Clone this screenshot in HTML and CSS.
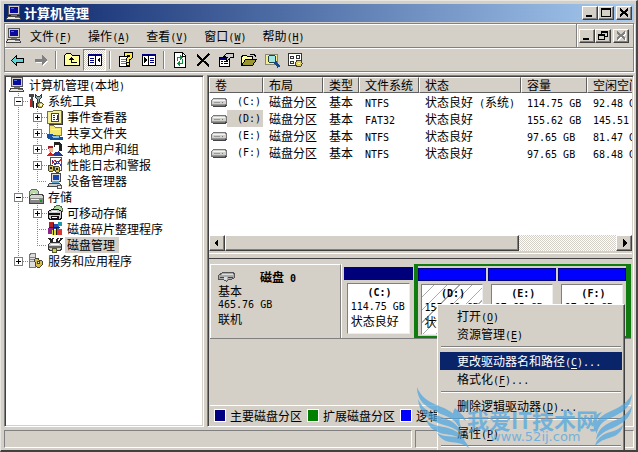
FILE: index.html
```html
<!DOCTYPE html>
<html lang="zh-CN">
<head>
<meta charset="utf-8">
<title>计算机管理</title>
<link rel="stylesheet" href="styles.css">
</head>
<body>
<svg class="defs" aria-hidden="true">
  <symbol id="pc" viewBox="0 0 16 16"><path fill="#fff" stroke="#555" d="M2.500.5h11v9h-11z"/><path fill="#d4d0c8" d="M3 1h10v8H3z"/><path fill="#0a0a9c" d="M4 2h8v6H4z"/><path fill="#4a6ae0" d="M5 3h3v1H5z"/><path fill="#e8e6e0" stroke="#444" d="M1.500 11.500h12l1 3h-14z"/><path fill="#777" d="M5 10h6v1H5zM9 12h4v1H9z"/></symbol>
  <symbol id="tools" viewBox="0 0 16 16"><path fill="#444" d="M1 1h5v3H5v10H3V4H1z"/><path fill="#b22" d="M2 6h2v8H2z"/><path fill="#8aa" stroke="#333" d="M7.500 1.500v3l2 2v7h2v-7l2-2v-3l-2 2h-2z"/><path fill="#d9c34a" stroke="#553" d="M10.500 9.500h3l2 2-2 3h-3l-1-3z"/><path fill="#fff" d="M12 11h2v2h-2z"/><path stroke="#222" d="M5.500 8v7M8.500 10v5"/></symbol>
  <symbol id="event" viewBox="0 0 16 16"><path fill="#f6ef9c" stroke="#77713a" d="M.5 2.500h5l1-1h8v13h-14z"/><path fill="#fff" stroke="#444" d="M4.500 4.500h7v8h-7z"/><path fill="none" stroke="#333" d="M6 6.500h2M6 8.500h2M6 10.500h2M10.500 6v5M9 10.500h2"/><path fill="none" stroke="#333" d="M15.500 2v13.500H2"/></symbol>
  <symbol id="share" viewBox="0 0 16 16"><path fill="#f5e66e" stroke="#88823c" d="M2.500.5h4l2 2h6v8h-12z"/><path fill="#fff8a8" d="M4 4h9v1H4z"/><path fill="#164fa0" d="M0 9h5l5 2 6 1v3H4l-4-2z"/><path fill="#8bc3df" d="M5 11h7v2H6z"/></symbol>
  <symbol id="users" viewBox="0 0 16 16"><path fill="#222" d="M7 1h6l2 3v6h-4l-4-4z"/><path fill="#fff" d="M8 4h4v5l-2 2-2-3z"/><path fill="#923" d="M1 5h5v3H1z"/><path fill="#e8b890" d="M2 7h4v4H2z"/><path fill="#263895" d="M7 12l5-2 4 5H6z"/><path fill="#c22" d="M0 14l3-3 5 4H0z"/></symbol>
  <symbol id="perf" viewBox="0 0 16 16"><path fill="#fff" stroke="#555" d="M3.500.5h11v13h-11z"/><path fill="none" stroke="#c22" d="M5 7l3-4 3 4 3-5"/><path fill="none" stroke="#339" d="M5 3l3 5 3-4 3 5"/><path fill="#d2ba57" stroke="#443" d="M2 8h3l2 2-1 4H2l-1-3zM8 9h3l2 2-1 4H9l-2-3z"/><path fill="#222" d="M3 10h2v2H3zM9 11h2v2H9z"/></symbol>
  <symbol id="device" viewBox="0 0 16 16"><path fill="#ddd" stroke="#444" d="M4.500.5h9v8h-9z"/><path fill="#1744b4" d="M6 2h6v5H6z"/><path fill="#ccc" stroke="#444" d="M2.500 10.500h10l2 3h-14z"/><path fill="#5ca8d0" d="M5 8h7v2H5z"/><path fill="#eee" stroke="#555" d="M10.500 12.500h4v3h-4z"/></symbol>
  <symbol id="store" viewBox="0 0 16 16"><circle cx="6" cy="5" r="5" fill="#b9d9a6" stroke="#667"/><path fill="#fff" d="M5 4h2v2H5z"/><path fill="#d5d5d0" stroke="#444" d="M1.500 7.500l2-2h11l1 2v7h-14z"/><path fill="#888" d="M2 9h13v5H2z"/><path fill="#eee" d="M3 10h8v1H3z"/><path fill="#191" d="M12 11h2v2h-2z"/></symbol>
  <symbol id="remove" viewBox="0 0 16 16"><circle cx="11" cy="5" r="4.500" fill="#acdba0" stroke="#564"/><path fill="#fff" d="M10 4h2v2h-2z"/><path fill="#ccc" stroke="#111" d="M1.500 6.500l3-2h7l3 2v7l-2 1h-10l-1-2z"/><path fill="#111" d="M2 8h11v2H2zM4 11h8v3H4z"/><path fill="#fff" d="M5 6h5v1H5zM5 12h5v1H5z"/></symbol>
  <symbol id="defrag" viewBox="0 0 16 16"><path fill="#b32323" d="M2 1h5v5H2z"/><path fill="#264eb8" d="M7 3h5v5H7z"/><path fill="#8c268a" d="M1 7h5v6H1z"/><path fill="#d6dc40" d="M5 9h4v5H5z"/><path fill="#d33" d="M9 8h6v6H9z"/><path fill="#29a" d="M11 1h4v4h-4z"/><path stroke="#222" d="M6.500 2v12M2 6.500h11M9.500 7v7"/></symbol>
  <symbol id="manage" viewBox="0 0 16 16"><path fill="none" stroke="#222" stroke-width="2" d="M2 1l4 5M6 1L4 5M11 1l-2 5M15 1l-4 5"/><path fill="#cfcfc9" stroke="#333" d="M1.500 7.500l2-2h9l2 2v5l-2 1h-9l-2-1z"/><path fill="#666" d="M2 9h12v2H2z"/><path fill="#fff" d="M4 7h8v1H4z"/><path fill="#dc4" stroke="#553" d="M5.500 11.500h4v4h-4z"/></symbol>
  <symbol id="service" viewBox="0 0 16 16"><path fill="#ddd" stroke="#777" d="M1.500 1.500l2-1h4v14h-6z"/><path stroke="#888" d="M2 4.500h5M2 6.500h5M2 8.500h5"/><path fill="#d8bb45" stroke="#443" d="M8 5h2l1 2h2l2 2-1 3-2 2H9l-2-2V9l-1-2z"/><path fill="#fff" stroke="#443" d="M9.500 8.500h2v2h-2z"/></symbol>
  <symbol id="drive" viewBox="0 0 16 10"><path fill="#d0d0cc" stroke="#777" d="M.5 3.500l2-2h12l1 2v4l-2 1H.5z"/><path fill="#f4f4f0" d="M2 3h12v1H2z"/><path fill="#999" d="M1 7h13v1H1zM3 5h6v1H3z"/><path fill="#777" d="M11 5h1v1h-1z"/><path fill="#444" d="M2 9h12V8h2v1l-2 1H2z"/></symbol>
  <symbol id="disk" viewBox="0 0 17 10"><path fill="#aaa" stroke="#555" d="M.5 3.500l4-3h11l1 2v3l-3 2h-3l-2 2-3-2h-5z"/><path fill="#ddd" d="M4 2h11v1H4z"/><path fill="#444" d="M2 5h4v1H2zM10 5h5v1h-5z"/><path fill="#ddd" d="M6 5h3v3H6z"/></symbol>
  <symbol id="g-v" viewBox="0 0 19 16"><path stroke="#888" stroke-dasharray="1 1" d="M9.500 0v16"/></symbol>
  <symbol id="g-t" viewBox="0 0 19 16"><path stroke="#888" stroke-dasharray="1 1" d="M9.500 0v16M9 8.500h10"/></symbol>
  <symbol id="g-l" viewBox="0 0 19 16"><path stroke="#888" stroke-dasharray="1 1" d="M9.500 0v8M9 8.500h10"/></symbol>
  <symbol id="g-p" viewBox="0 0 19 16"><path stroke="#888" stroke-dasharray="1 1" d="M9.500 0v16M14 8.500h5"/><path fill="#fff" stroke="#808080" d="M5.500 4.500h8v8h-8z"/><path stroke="#000" d="M7 8.500h5M9.500 6v5"/></symbol>
  <symbol id="g-m" viewBox="0 0 19 16"><path stroke="#888" stroke-dasharray="1 1" d="M9.500 0v16M14 8.500h5"/><path fill="#fff" stroke="#808080" d="M5.500 4.500h8v8h-8z"/><path stroke="#000" d="M7 8.500h5"/></symbol>
  <symbol id="g-e" viewBox="0 0 19 16"><path stroke="#888" stroke-dasharray="1 1" d="M9.500 0v4M14 8.500h5"/><path fill="#fff" stroke="#808080" d="M5.500 4.500h8v8h-8z"/><path stroke="#000" d="M7 8.500h5M9.500 6v5"/></symbol>
</svg>

<header class="title">
  <svg class="ico"><use href="#pc"/></svg>
  <h1>计算机管理</h1>
  <div class="winbtns">
    <button aria-label="最小化"><svg viewBox="0 0 12 10"><path fill="#000" d="M2 7h6v2H2z"/></svg></button>
    <button aria-label="最大化"><svg viewBox="0 0 12 10"><path fill="#000" d="M1 0h10v9H1zM2 2v6h8V2z" fill-rule="evenodd"/></svg></button>
    <button class="close" aria-label="关闭"><svg viewBox="0 0 12 10"><path fill="none" stroke="#000" stroke-width="2" d="M2 1l8 7M10 1L2 8"/></svg></button>
  </div>
</header>

<div class="bars">
  <div class="menurow">
    <nav class="menubar">
      <svg class="ico"><use href="#pc"/></svg>
      <button>文件<span class="lat">(<u>F</u>)</span></button>
      <button>操作<span class="lat">(<u>A</u>)</span></button>
      <button>查看<span class="lat">(<u>V</u>)</span></button>
      <button>窗口<span class="lat">(<u>W</u>)</span></button>
      <button>帮助<span class="lat">(<u>H</u>)</span></button>
    </nav>
    <div class="winbtns mdi">
      <button aria-label="最小化子窗口"><svg viewBox="0 0 12 10"><path fill="#000" d="M2 7h6v2H2z"/></svg></button>
      <button aria-label="还原子窗口"><svg viewBox="0 0 12 10"><path fill="#000" fill-rule="evenodd" d="M4 0h7v6H8V5h2V2H5v1H4zM1 3h7v6H1zM2 5v3h5V5z"/></svg></button>
      <button class="close" aria-label="关闭子窗口" disabled><svg viewBox="0 0 12 10"><path fill="none" stroke="#fff" stroke-width="2" d="M3 2l8 7M11 2L3 9"/><path fill="none" stroke="#808080" stroke-width="2" d="M2 1l8 7M10 1L2 8"/></svg></button>
    </div>
  </div>
  <div class="toolbar" role="toolbar" aria-label="工具栏">
    <button aria-label="后退"><svg viewBox="0 0 16 16"><path fill="#5cd6d6" stroke="#000" d="M1.500 8.500l5-5v3h7v4h-7v3z"/></svg></button>
    <button aria-label="前进"><svg viewBox="0 0 16 16"><path fill="#fff" d="M15 9l-5 5v-3H3V8h7V5z"/><path fill="#808080" d="M14 8l-5 5v-3H2V7h7V3z"/></svg></button>
    <i class="sep"></i>
    <button aria-label="向上"><svg viewBox="0 0 16 16"><path fill="#ffffa0" stroke="#000" d="M.5 13.500v-10l2-2h4l2 2h7v10z"/><path fill="none" stroke="#000" d="M7.500 5v5.500h5M5 7.500h5M6 6.500h3"/></svg></button>
    <button class="on" aria-label="显示控制台树"><svg viewBox="0 0 16 16"><path fill="#fff" stroke="#000" d="M1.500 2.500h13v11h-13z"/><path fill="#000080" d="M1 2h14v2H1z"/><path stroke="#000" d="M8.500 3v10"/><path stroke="#000080" d="M3 6.500h4M3 8.500h4M3 10.500h4"/><path fill="#000" d="M13 5v6l-3-3z"/></svg></button>
    <i class="sep"></i>
    <button aria-label="帮助"><svg viewBox="0 0 16 16"><path fill="#fff" stroke="#000" d="M1.500 4.500h10v10h-10z"/><path stroke="#777" d="M3 7.500h6M3 9.500h6M3 11.500h6"/><path fill="none" stroke="#000" stroke-width="4" d="M8 4V2h5v3l-3 2v2M10 10v4"/><path fill="none" stroke="#ffe94a" stroke-width="2" d="M8 4V2h5v3l-3 2v2M10 11v2"/></svg></button>
    <button aria-label="操作窗格"><svg viewBox="0 0 16 16"><path fill="#fff" stroke="#000" d="M1.500 2.500h13v11h-13z"/><path fill="#000080" d="M1 2h14v2H1z"/><path stroke="#000" d="M7.500 3v10"/><path stroke="#000080" d="M9 6.500h4M9 8.500h4M9 10.500h4"/><path fill="#000" d="M3 5v6l3-3z"/></svg></button>
    <i class="sep"></i>
    <button aria-label="刷新"><svg viewBox="0 0 16 16"><path fill="#fff" stroke="#000" d="M2.500.5h8l3 3v12h-11z"/><path fill="none" stroke="#000" d="M10.500 1v3h3"/><path fill="none" stroke="#138a3c" d="M5.500 9V5.500H9M10.500 7v4.500H7"/><path fill="#138a3c" d="M8 3v5l3-2.500zM8 9v5l-3-2.500z"/></svg></button>
    <button aria-label="删除"><svg viewBox="0 0 16 16"><path fill="none" stroke="#000" stroke-width="2" d="M2 3l12 11M14 2L2 14"/></svg></button>
    <button aria-label="属性"><svg viewBox="0 0 16 16"><path fill="#fff" stroke="#000" d="M1.500 5.500h10v9h-10z"/><path fill="#000080" d="M2 6h9v2H2z"/><path stroke="#000" d="M3 9.500h2M6 9.500h4M3 11.500h2M6 11.500h4"/><path fill="#ccc" stroke="#000" d="M5.500 4.500l3-3h7v4h-3l-3 3-2-1 2-2z"/></svg></button>
    <button aria-label="打开"><svg viewBox="0 0 16 16"><path fill="#ffffa0" stroke="#000" d="M.5 13.500v-9l2-1h3l1 1h5v3"/><path fill="#9b9630" stroke="#000" d="M.5 13.500l4-6h11l-4 6z"/><path fill="none" stroke="#000" d="M9 2.500h4l2 2"/></svg></button>
    <button aria-label="查找"><svg viewBox="0 0 16 16"><path fill="#f5ed8d" stroke="#887" d="M1.500 2.500h12v10h-12z"/><circle cx="8" cy="7" r="4" fill="#9ee6e6" stroke="#244"/><path stroke="#144b8c" stroke-width="3" d="M11 10l4 5"/></svg></button>
    <button aria-label="设置"><svg viewBox="0 0 16 16"><path fill="#fff" stroke="#333" d="M1.500 1.500h13v12h-13z"/><path fill="none" stroke="#333" d="M3.500 4.500h3v2h-3zM9.500 3.500h3v3h-3zM3.500 9.500h3v2h-3z"/><path fill="#e0ce61" stroke="#443" d="M9.500 8.500h4l2 3-2 3h-4l-1-3z"/><path fill="#fff" d="M11 11h2v1h-2z"/></svg></button>
  </div>
</div>

<main class="content">
  <ul class="tree pane">
    <li><svg class="ico"><use href="#pc"/></svg><span>计算机管理<b class="lat">(</b>本地<b class="lat">)</b></span></li>
    <li><svg class="g"><use href="#g-m"/></svg><svg class="ico"><use href="#tools"/></svg><span>系统工具</span></li>
    <li><svg class="g"><use href="#g-v"/></svg><svg class="g"><use href="#g-p"/></svg><svg class="ico"><use href="#event"/></svg><span>事件查看器</span></li>
    <li><svg class="g"><use href="#g-v"/></svg><svg class="g"><use href="#g-p"/></svg><svg class="ico"><use href="#share"/></svg><span>共享文件夹</span></li>
    <li><svg class="g"><use href="#g-v"/></svg><svg class="g"><use href="#g-p"/></svg><svg class="ico"><use href="#users"/></svg><span>本地用户和组</span></li>
    <li><svg class="g"><use href="#g-v"/></svg><svg class="g"><use href="#g-p"/></svg><svg class="ico"><use href="#perf"/></svg><span>性能日志和警报</span></li>
    <li><svg class="g"><use href="#g-v"/></svg><svg class="g"><use href="#g-l"/></svg><svg class="ico"><use href="#device"/></svg><span>设备管理器</span></li>
    <li><svg class="g"><use href="#g-m"/></svg><svg class="ico"><use href="#store"/></svg><span>存储</span></li>
    <li><svg class="g"><use href="#g-v"/></svg><svg class="g"><use href="#g-p"/></svg><svg class="ico"><use href="#remove"/></svg><span>可移动存储</span></li>
    <li><svg class="g"><use href="#g-v"/></svg><svg class="g"><use href="#g-t"/></svg><svg class="ico"><use href="#defrag"/></svg><span>磁盘碎片整理程序</span></li>
    <li><svg class="g"><use href="#g-v"/></svg><svg class="g"><use href="#g-l"/></svg><svg class="ico"><use href="#manage"/></svg><span class="sel">磁盘管理</span></li>
    <li><svg class="g"><use href="#g-e"/></svg><svg class="ico"><use href="#service"/></svg><span>服务和应用程序</span></li>
  </ul>

  <section class="right pane">
    <div class="volumes">
      <table>
        <colgroup><col class="c1"><col class="c2"><col class="c3"><col class="c4"><col class="c5"><col class="c6"><col class="c7"></colgroup>
        <thead><tr><th>卷</th><th>布局</th><th>类型</th><th>文件系统</th><th>状态</th><th>容量</th><th>空闲空间</th></tr></thead>
        <tbody>
          <tr><td class="vol"><svg><use href="#drive"/></svg><span class="lat">(C:)</span></td><td>磁盘分区</td><td>基本</td><td><span class="lat">NTFS</span></td><td>状态良好<span class="lat"> (</span>系统<span class="lat">)</span></td><td><span class="lat">114.75 GB</span></td><td><span class="lat">92.48 GB</span></td></tr>
          <tr><td class="vol"><svg><use href="#drive"/></svg><span class="lat sel">(D:)</span></td><td>磁盘分区</td><td>基本</td><td><span class="lat">FAT32</span></td><td>状态良好</td><td><span class="lat">155.62 GB</span></td><td><span class="lat">145.51 GB</span></td></tr>
          <tr><td class="vol"><svg><use href="#drive"/></svg><span class="lat">(E:)</span></td><td>磁盘分区</td><td>基本</td><td><span class="lat">NTFS</span></td><td>状态良好</td><td><span class="lat">97.65 GB</span></td><td><span class="lat">81.47 GB</span></td></tr>
          <tr><td class="vol"><svg><use href="#drive"/></svg><span class="lat">(F:)</span></td><td>磁盘分区</td><td>基本</td><td><span class="lat">NTFS</span></td><td>状态良好</td><td><span class="lat">97.65 GB</span></td><td><span class="lat">68.48 GB</span></td></tr>
        </tbody>
      </table>
    </div>
    <div class="scroll">
      <button aria-label="向左滚动"><svg viewBox="0 0 8 8"><path d="M5 0v8L1 4z"/></svg></button>
      <div class="thumb"></div><div class="track"></div>
      <button aria-label="向右滚动"><svg viewBox="0 0 8 8"><path d="M3 0v8l4-4z"/></svg></button>
    </div>
    <div class="splitter"></div>
    <div class="diskview">
      <div class="diskrow">
        <div class="diskinfo">
          <div class="diskname"><svg><use href="#disk"/></svg><strong>磁盘<span class="lat"> 0</span></strong></div>
          <div>基本</div><div class="lat">465.76 GB</div><div>联机</div>
        </div>
        <div class="part primary"><div class="band"></div><div class="body"><strong class="lat">(C:)</strong><span class="lat">114.75 GB</span><span>状态良好</span></div></div>
        <div class="extended">
          <div class="part picked"><div class="band"></div><div class="body"><strong class="lat">(D:)</strong><span class="lat">155.62 GB</span><span>状态良好</span></div></div>
          <div class="part"><div class="band"></div><div class="body"><strong class="lat">(E:)</strong><span class="lat">97.65 GB</span><span>状态良好</span></div></div>
          <div class="part"><div class="band"></div><div class="body"><strong class="lat">(F:)</strong><span class="lat">97.65 GB</span><span>状态良好</span></div></div>
        </div>
      </div>
      <div class="legend">
        <span class="key navy"></span><span>主要磁盘分区</span>
        <span class="key green"></span><span>扩展磁盘分区</span>
        <span class="key blue"></span><span>逻辑驱动器</span>
      </div>
    </div>
  </section>
</main>

<footer class="status"><div></div><div></div></footer>

<div class="context" role="menu">
  <button role="menuitem">打开<span class="lat">(<u>O</u>)</span></button>
  <button role="menuitem">资源管理<span class="lat">(<u>E</u>)</span></button>
  <hr>
  <button role="menuitem" class="hot">更改驱动器名和路径<span class="lat">(<u>C</u>)...</span></button>
  <button role="menuitem">格式化<span class="lat">(<u>F</u>)...</span></button>
  <hr>
  <button role="menuitem">删除逻辑驱动器<span class="lat">(<u>D</u>)...</span></button>
  <hr>
  <button role="menuitem">属性<span class="lat">(<u>P</u>)</span></button>
  <hr>
</div>

<svg class="mark" viewBox="0 0 223 82">
  <g fill="#4aa5e2">
    <path d="M2 17C8 32 21 34 31 39C41 44 45 50 44 57C39 47 31 47 22 42C11 37 2 31 2 17z"/>
    <path d="M3 29C9 42 19 44 29 48C38 51 44 56 48 65C38 56 31 56 23 53C12 49 4 42 3 29z"/>
    <path d="M11 50C19 57 29 56 36 59C42 61 47 65 50 71C41 65 36 65 29 64C20 62 14 58 11 50z"/>
    <path d="M22 63C30 68 38 65 45 68C50 70 52 73 54 78C46 72 41 73 35 72C29 71 25 68 22 63z"/>
    <path d="M40 38C35 45 40 53 47 59C43 50 43 46 51 51C49 45 45 43 40 38z"/>
    <path d="M217 24C211 36 199 39 190 44C182 49 179 54 182 62C186 50 192 50 200 46C210 41 216 36 217 24z"/>
    <path d="M217 36C211 47 202 49 194 53C186 57 182 62 181 70C188 60 195 60 202 56C211 51 216 46 217 36z"/>
    <path d="M208 55C202 62 194 61 188 65C183 68 181 72 180 76C187 69 192 69 197 67C203 65 207 61 208 55z"/>
    <path d="M187 42C178 45 175 52 182 64C182 56 180 49 187 42z"/>
  </g>
  <text class="mark-name" x="52" y="59">我爱IT技术网</text>
  <text class="mark-url" x="75" y="71">www.52ij.com</text>
</svg>
</body>
</html>
```

FILE: styles.css
```css
* { box-sizing: border-box; }

html { height: 100%; overflow: hidden; }

body {
  display: flex;
  flex-direction: column;
  position: relative;
  height: 100%;
  margin: 0;
  padding: 3px 2px 2px 3px;
  overflow: hidden;
  background: #d4d0c8;
  border: solid;
  border-width: 1px 2px 2px 1px;
  border-color: #e8e6e0 #484848 #404040 #e8e6e0;
  color: #000;
  font: 12px/16px "Noto Sans CJK SC", sans-serif;
  white-space: nowrap;
}

svg { display: block; shape-rendering: crispEdges; flex: none; }
.defs { position: absolute; width: 0; height: 0; }
.ico { width: 16px; height: 16px; }

button {
  margin: 0;
  padding: 0;
  border: 0;
  background: none;
  color: inherit;
  font: inherit;
}

.lat {
  font-family: "DejaVu Sans Mono", "Liberation Mono", monospace;
  font-size: 10px;
  font-weight: normal;
  line-height: 10px;
  white-space: pre;
}
strong .lat, strong.lat { font-weight: bold; }
u { text-underline-offset: 2px; }

/* title bar */
.title {
  display: flex;
  align-items: center;
  flex: none;
  height: 18px;
  padding: 0 2px;
  background: linear-gradient(90deg, #0a246a, #a6caf0);
  color: #fff;
}
.title h1 { margin: 0 auto 0 2px; font-size: 13px; line-height: 18px; }

.winbtns { display: flex; align-items: center; }
.winbtns button {
  width: 16px;
  height: 14px;
  padding: 1px;
  background: #d4d0c8;
  border: 1px solid;
  border-color: #fff #404040 #404040 #fff;
  box-shadow: inset -1px -1px #808080;
}
.winbtns svg { width: 12px; height: 10px; }
.winbtns .close { margin-left: 2px; }

/* menu and tool bars */
.bars {
  flex: none;
  margin-top: 1px;
  border: 1px solid #808080;
  box-shadow: 1px 1px #fff;
}
.menurow { display: flex; height: 24px; border-bottom: 1px solid #808080; }
.menubar {
  display: flex;
  align-items: center;
  flex: 1;
  gap: 16px;
  border: solid #fff;
  border-width: 1px 0 0 1px;
}
.menubar .ico { margin-right: -8px; }
.mdi { padding: 0 4px 0 2px; border-left: 1px solid #808080; box-shadow: inset 1px 1px #fff; }

.toolbar {
  display: flex;
  align-items: center;
  height: 23px;
  padding-left: 1px;
  border-top: 1px solid #fff;
}
.toolbar button { display: grid; place-items: center; width: 23px; height: 22px; }
.toolbar svg { width: 16px; height: 16px; }
.toolbar .on {
  border: 1px solid;
  border-color: #808080 #fff #fff #808080;
  background: repeating-conic-gradient(#fff 0 25%, #d4d0c8 0 50%) 0 0 / 2px 2px;
}
.sep { width: 2px; height: 18px; margin: 0 3px; border-left: 1px solid #808080; border-right: 1px solid #fff; }

/* panes */
.content {
  display: grid;
  grid-template-columns: 200px minmax(0, 1fr);
  gap: 3px;
  flex: 1;
  min-height: 0;
  margin-top: 3px;
}
.pane {
  min-height: 0;
  border: 1px solid;
  border-color: #808080 #fff #fff #808080;
  box-shadow: inset 1px 1px #404040, inset -1px -1px #d4d0c8;
  overflow: hidden;
}

.tree { margin: 0; padding: 1px 3px; background: #fff; list-style: none; }
.tree li { display: flex; height: 16px; padding-left: 1px; }
.tree .ico { margin-right: 2px; }
.tree .g { width: 19px; height: 16px; }
.tree span { padding: 0 4px 0 2px; }
.tree .sel { background: #d4d0c8; }

.right { display: flex; flex-direction: column; padding: 1px; background: #d4d0c8; }

.volumes { flex: none; height: 158px; background: #fff; overflow: hidden; }
.volumes table { width: 500px; table-layout: fixed; border-collapse: separate; border-spacing: 0; }
.c1 { width: 54px; }
.c2 { width: 60px; }
.c3 { width: 36px; }
.c4 { width: 60px; }
.c5 { width: 102px; }
.c6 { width: 66px; }
.volumes th {
  height: 16px;
  padding: 0 0 0 5px;
  background: #d4d0c8;
  border: 1px solid;
  border-color: #fff #606060 #606060 #fff;
  font-weight: normal;
  line-height: 14px;
  text-align: left;
}
.volumes td { height: 17px; padding: 0 0 0 6px; line-height: 16px; overflow: hidden; }
.volumes .vol { display: flex; align-items: center; padding: 0 0 0 2px; }
.vol svg { width: 16px; height: 10px; }
.vol .lat { flex: 1; padding-left: 10px; line-height: 17px; }
.vol .sel { background: #d4d0c8; }

.scroll { display: flex; flex: none; height: 16px; }
.scroll button, .thumb {
  background: #d4d0c8;
  border: 1px solid;
  border-color: #fff #404040 #404040 #fff;
  box-shadow: inset -1px -1px #808080;
}
.scroll button { display: grid; place-items: center; width: 16px; }
.scroll svg { width: 8px; height: 8px; }
.thumb { flex: 293; }
.track { flex: 98; background: repeating-conic-gradient(#fff 0 25%, #d4d0c8 0 50%) 0 0 / 2px 2px; }
.splitter { flex: none; height: 8px; border-bottom: 1px solid #404040; box-shadow: inset 0 2px #d4d0c8, inset 0 3px #fff; }

/* graphical disk view */
.diskview { display: flex; flex-direction: column; flex: 1; min-height: 0; padding: 5px 1px 0; }
.diskrow {
  display: grid;
  grid-template-columns: minmax(0, 131fr) minmax(0, 73fr) minmax(0, 218fr);
  height: 75px;
  border-bottom: 1px solid #808080;
}
.diskinfo {
  padding: 5px 0 0 7px;
  border: solid;
  border-width: 1px 1px 0 1px;
  border-color: #fff #808080 #808080 #fff;
}
.diskinfo > div { height: 14px; line-height: 14px; }
.diskname { display: flex; align-items: center; gap: 25px; }
.diskname svg { width: 17px; height: 10px; }

.part { display: flex; flex-direction: column; flex: 1; min-width: 0; min-height: 0; }
.primary { padding: 3px 1px 3px 2px; border-left: 1px solid #fff; }
.band { flex: none; height: 13px; background: #0000ff; border: 1px solid #000080; }
.primary .band { background: #00007b; }
.body {
  display: flex;
  flex-direction: column;
  flex: 1;
  min-height: 0;
  margin: 3px 3px 1px;
  padding: 2px 0 0 3px;
  background: #fff;
  border: 1px solid;
  border-color: #808080 #eee #eee #808080;
  overflow: hidden;
}
.body strong, .body span { line-height: 14px; }
.body strong { text-align: center; }
.extended {
  display: flex;
  gap: 2px;
  min-height: 0;
  padding: 2px 0 0;
  border: solid #107c10;
  border-width: 2px 5px 2px 4px;
}
.picked .body { background: repeating-linear-gradient(135deg, #fff 0 8px, #aaa 8px 9px); }

.legend {
  display: flex;
  align-items: center;
  height: 20px;
  margin-top: auto;
  padding-left: 4px;
  border-top: 1px solid #fff;
}
.key { width: 12px; height: 13px; margin-right: 4px; border: 1px solid #fff; }
.legend span + .key { margin-left: 5px; }
.navy { background: #000080; }
.green { background: #008000; }
.blue { background: #0000ff; }

.status { display: flex; gap: 3px; flex: none; height: 18px; margin-top: 3px; }
.status div { flex: 218; border: 1px solid; border-color: #808080 #fff #fff #808080; }
.status div:first-child { flex: 409; }

/* context menu */
.context {
  position: absolute;
  top: 303px;
  left: 436px;
  width: 188px;
  height: 160px;
  padding: 2px;
  background: #d4d0c8;
  border: 1px solid;
  border-color: #fff #404040 #404040 #fff;
  box-shadow: inset -1px 0 #808080;
}
.context button { display: block; width: 100%; height: 18px; padding-left: 17px; line-height: 18px; text-align: left; }
.context .hot { background: #0a246a; color: #fff; }
.context hr { height: 2px; margin: 3px 1px 4px; border: solid; border-width: 1px 0; border-color: #808080 #fff #fff; }

.mark {
  position: absolute;
  right: -2px;
  bottom: -2px;
  width: 223px;
  height: 82px;
  opacity: 0.7;
  pointer-events: none;
  shape-rendering: auto;
}
.mark-name { font: bold 22px "Noto Sans CJK SC", sans-serif; fill: #4aa5e2; }
.mark-url { font: 13px "DejaVu Sans", sans-serif; fill: #4aa5e2; }
```
